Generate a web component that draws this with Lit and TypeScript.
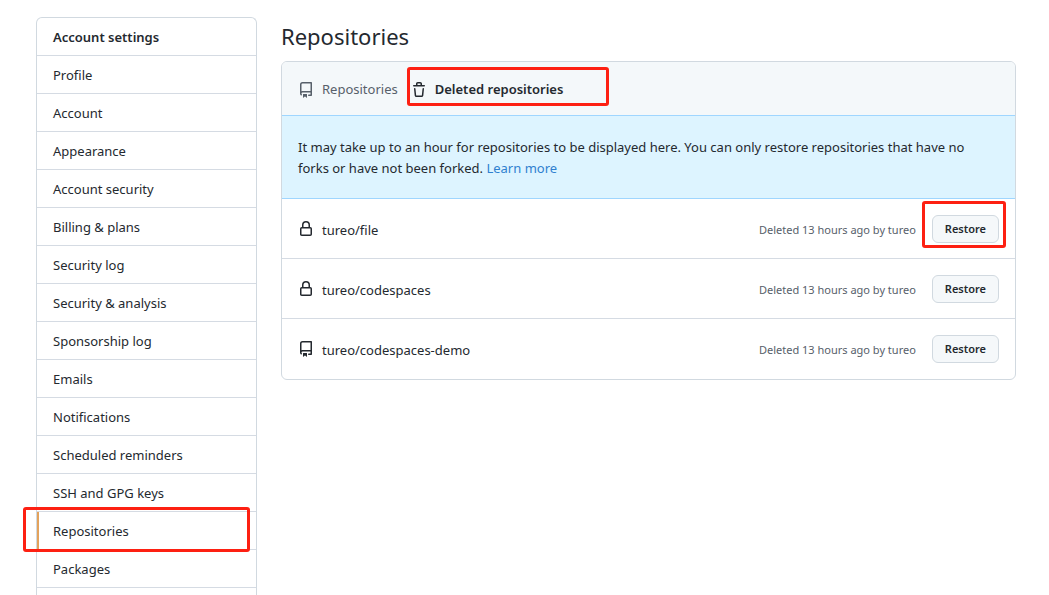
import { LitElement, html, css, svg } from "lit";
import { customElement, property } from "lit/decorators.js";
import { classMap } from "lit/directives/class-map.js";

type IconName = "repo" | "lock" | "trash";

const ICON_PATHS: Record<IconName, string> = {
  repo: "M2 2.5A2.5 2.5 0 014.5 0h8.75a.75.75 0 01.75.75v12.5a.75.75 0 01-.75.75h-2.5a.75.75 0 110-1.5h1.75v-2h-8a1 1 0 00-.714 1.7.75.75 0 01-1.072 1.05A2.495 2.495 0 012 11.5v-9zm10.5-1V9h-8c-.356 0-.694.074-1 .208V2.5a1 1 0 011-1h8zM5 12.25v3.25a.25.25 0 00.4.2l1.45-1.087a.25.25 0 01.3 0L8.6 15.7a.25.25 0 00.4-.2v-3.25a.25.25 0 00-.25-.25h-3.5a.25.25 0 00-.25.25z",
  lock: "M4 4v2h-.25A1.75 1.75 0 002 7.75v5.5c0 .966.784 1.75 1.75 1.75h8.5A1.75 1.75 0 0014 13.25v-5.5A1.75 1.75 0 0012.25 6H12V4a4 4 0 10-8 0zm6.5 2V4a2.5 2.5 0 10-5 0v2h5zM12 7.5h.25a.25.25 0 01.25.25v5.5a.25.25 0 01-.25.25h-8.5a.25.25 0 01-.25-.25v-5.5a.25.25 0 01.25-.25H12z",
  trash: "M6.5 1.75a.25.25 0 01.25-.25h2.5a.25.25 0 01.25.25V3h-3V1.75zm4.5 0V3h2.25a.75.75 0 010 1.5H2.75a.75.75 0 010-1.5H5V1.75C5 .784 5.784 0 6.75 0h2.5C10.216 0 11 .784 11 1.75zM4.496 6.675a.75.75 0 10-1.492.15l.66 6.6A1.75 1.75 0 005.405 15h5.19c.9 0 1.652-.681 1.741-1.576l.66-6.6a.75.75 0 00-1.492-.149l-.66 6.6a.25.25 0 01-.249.225h-5.19a.25.25 0 01-.249-.225l-.66-6.6z",
};

@customElement("octo-icon")
class OctoIcon extends LitElement {
  @property() name: IconName = "repo";

  static styles = css`
    :host { display: block; flex: none; width: 16px; height: 16px; }
    .icon { display: block; fill: currentColor; }
  `;

  render() {
    return html`<svg class="icon" width="16" height="16" viewBox="0 0 16 16" aria-hidden="true">
      ${svg`<path fill-rule="evenodd" d=${ICON_PATHS[this.name]}></path>`}
    </svg>`;
  }
}

const MENU = [
  "Profile", "Account", "Appearance", "Account security", "Billing & plans",
  "Security log", "Security & analysis", "Sponsorship log", "Emails",
  "Notifications", "Scheduled reminders", "SSH and GPG keys", "Repositories",
  "Packages",
];

interface Repo { name: string; icon: IconName; marked?: boolean; }

const REPOS: Repo[] = [
  { name: "tureo/file", icon: "lock", marked: true },
  { name: "tureo/codespaces", icon: "lock" },
  { name: "tureo/codespaces-demo", icon: "repo" },
];

@customElement("app-root")
class AppRoot extends LitElement {
  @property() current = "Repositories";

  static styles = css`
    :host {
      display: block;
      box-sizing: border-box;
      height: 100vh;
      overflow: hidden;
      background: #fff;
      color: #24292f;
      font: 13px/21px "Noto Sans", "Open Sans", sans-serif;
    }
    * { box-sizing: border-box; }
    a { color: inherit; text-decoration: none; }
    .page {
      display: flex;
      gap: 24px;
      min-height: 100%;
      padding: 17px 33px 0 36px;
    }
    .menu {
      flex: none;
      width: 221px;
      border: 1px solid #d1d9e0;
      border-bottom: 0;
      border-radius: 6px 6px 0 0;
    }
    .menu-title, .menu-item {
      display: block;
      position: relative;
      margin: 0;
      padding: 9px 16px 7px;
      border-bottom: 1px solid #d5dbe3;
      font-size: 13px;
      font-weight: 400;
    }
    .menu-title { font-weight: 600; }
    .current { box-shadow: inset 2px 0 #e3a25c; }
    .main { flex: 1; min-width: 0; }
    .title {
      margin: 0;
      padding: 1px 0 7px;
      font-size: 22px;
      font-weight: 400;
      line-height: 36px;
    }
    .box { border: 1px solid #d1d9e0; border-radius: 6px; }
    .tabs {
      display: flex;
      gap: 13px;
      padding: 17px 16px 15px;
      background: #f4f8fa;
      border-radius: 5px 5px 0 0;
    }
    .tab {
      display: flex;
      align-items: center;
      gap: 8px;
      position: relative;
      color: #57606a;
    }
    .selected { color: #24292f; font-weight: 600; }
    .notice {
      margin: 0;
      padding: 21px 24px 19px 16px;
      background: #ddf4ff;
      border-top: 1px solid #9fd6ff;
      border-bottom: 1px solid #9fd6ff;
    }
    .link { color: #2f80cf; }
    .repos { margin: 0; padding: 0; list-style: none; }
    .repo {
      display: flex;
      align-items: center;
      gap: 8px;
      padding: 16px 16px 15px;
      border-bottom: 1px solid #d5dbe3;
    }
    .repo:last-child { padding-bottom: 16px; border-bottom: 0; }
    .name { flex: 1; padding-top: 2px; }
    .when { margin-right: 8px; color: #57606a; font-size: 11px; }
    .action { display: flex; position: relative; }
    .restore {
      height: 28px;
      padding: 0 12px;
      border: 1px solid #d1d9e0;
      border-radius: 6px;
      background: #f5f8fa;
      color: #24292f;
      font: 600 11px/20px "Noto Sans", "Open Sans", sans-serif;
    }
    .mark {
      position: absolute;
      z-index: 1;
      border: 3px solid #fd2012;
      border-radius: 3px;
      pointer-events: none;
    }
    .mark-menu { inset: -5px 6px -3px -14px; }
    .mark-tab { inset: -12px -46px -6px -4px; }
    .mark-button { inset: -14px -7px -5px -10px; }
  `;

  render() {
    return html`
      <div class="page">
        <nav class="menu" aria-label="Account settings">
          <h2 class="menu-title">Account settings</h2>
          ${MENU.map((label) => {
            const current = label === this.current;
            return html`<a href="#" class=${classMap({ "menu-item": true, current })}
              >${label}${current ? html`<span class="mark mark-menu"></span>` : ""}</a>`;
          })}
        </nav>
        <main class="main">
          <h1 class="title">Repositories</h1>
          <div class="box">
            <nav class="tabs" aria-label="Repository lists">
              <a href="#" class="tab"><octo-icon name="repo"></octo-icon>Repositories</a>
              <a href="#" class="tab selected"><octo-icon name="trash"></octo-icon>Deleted repositories<span class="mark mark-tab"></span></a>
            </nav>
            <p class="notice">
              It may take up to an hour for repositories to be displayed here. You can only restore
              repositories that have no forks or have not been forked.
              <a href="#" class="link">Learn more</a>
            </p>
            <ul class="repos">
              ${REPOS.map((repo) => html`
                <li class="repo">
                  <octo-icon name=${repo.icon}></octo-icon>
                  <span class="name">${repo.name}</span>
                  <span class="when">Deleted 13 hours ago by tureo</span>
                  <span class="action">
                    <button type="button" class="restore">Restore</button>
                    ${repo.marked ? html`<span class="mark mark-button"></span>` : ""}
                  </span>
                </li>`)}
            </ul>
          </div>
        </main>
      </div>
    `;
  }
}
